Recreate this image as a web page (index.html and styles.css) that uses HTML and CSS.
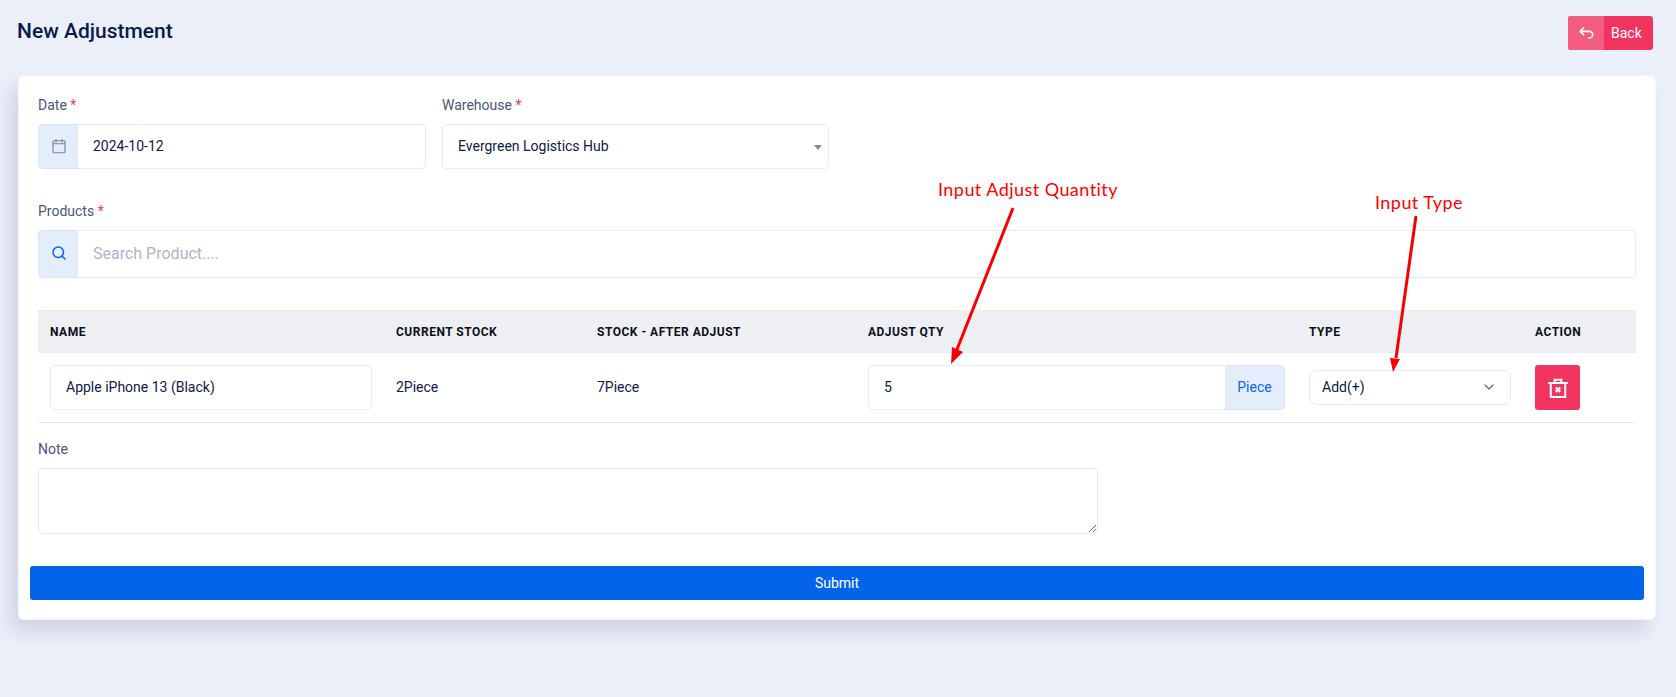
FILE: index.html
```html
<!DOCTYPE html>
<html lang="en">

<head>
    <meta charset="UTF-8">
    <meta name="viewport" content="width=device-width, initial-scale=1.0">
    <title>New Adjustment</title>
    <link rel="stylesheet" href="styles.css">
</head>

<body>
    <div class="page">
        <div class="page-header">
            <h1>New Adjustment</h1>
            <a class="back-btn" href="#">
                <span class="back-icon">
                    <svg width="20" height="20" viewBox="0 0 24 24"><path d="M9 14l-4 -4l4 -4M5 10h11a4 4 0 1 1 0 8h-1"/></svg>
                </span>
                <span class="back-text">Back</span>
            </a>
        </div>

        <form class="card">
            <div class="card-body">
                <div class="row">
                    <div class="field date-field">
                        <label>Date <span class="req">*</span></label>
                        <div class="input-group">
                            <span class="addon icon-gray">
                                <svg width="18" height="18" viewBox="0 0 24 24"><rect x="4" y="5" width="16" height="16" rx="1"/><path d="M16 3v4M8 3v4M4 9h16"/></svg>
                            </span>
                            <input type="text" value="2024-10-12">
                        </div>
                    </div>
                    <div class="field warehouse-field">
                        <label>Warehouse <span class="req">*</span></label>
                        <div class="select-box">
                            <span>Evergreen Logistics Hub</span>
                            <span class="caret"></span>
                        </div>
                    </div>
                </div>

                <div class="field products-field">
                    <label>Products <span class="req">*</span></label>
                    <div class="input-group tall">
                        <span class="addon icon-blue">
                            <svg width="18" height="18" viewBox="0 0 24 24"><circle cx="11" cy="11" r="7"/><path d="M20 20l-4 -4"/></svg>
                        </span>
                        <input class="search" type="text" placeholder="Search Product....">
                    </div>
                </div>

                <table class="items">
                    <thead>
                        <tr>
                            <th class="col-name">Name</th>
                            <th class="col-current">Current Stock</th>
                            <th class="col-after">Stock - After Adjust</th>
                            <th class="col-qty">Adjust Qty</th>
                            <th class="col-type">Type</th>
                            <th>Action</th>
                        </tr>
                    </thead>
                    <tbody>
                        <tr>
                            <td><input type="text" value="Apple iPhone 13 (Black)"></td>
                            <td>2Piece</td>
                            <td>7Piece</td>
                            <td>
                                <div class="input-group">
                                    <input type="text" value="5">
                                    <span class="addon unit">Piece</span>
                                </div>
                            </td>
                            <td>
                                <div class="select-box small">
                                    <span>Add(+)</span>
                                    <svg class="chevron" width="16" height="16" viewBox="0 0 24 24"><path d="M6 9l6 6l6 -6"/></svg>
                                </div>
                            </td>
                            <td>
                                <a class="delete-btn" href="#">
                                    <svg width="20" height="20" viewBox="0 0 18 18"><path d="M1 4.500h16M2.500 4.500v12.500h13v-12.500M6 4.500v-3h6v3"/><path class="x-mark" d="M7 8.500l4 4m0 -4l-4 4"/></svg>
                                </a>
                            </td>
                        </tr>
                    </tbody>
                </table>

                <div class="field note-field">
                    <label>Note</label>
                    <textarea></textarea>
                </div>
            </div>

            <button class="submit" type="button">Submit</button>
        </form>
    </div>

    <!-- red annotations drawn over the screenshot -->
    <span class="note-label qty-label">Input Adjust Quantity</span>
    <span class="note-label type-label">Input Type</span>
    <svg class="arrows" width="1676" height="697" viewBox="0 0 1676 697">
        <path class="arrow-line" d="M1013 208L956 352"/>
        <path class="arrow-head" d="M951 364L952 347L963 352Z"/>
        <path class="arrow-line" d="M1416 216L1396 358"/>
        <path class="arrow-head" d="M1393 372L1390 358L1400 359Z"/>
    </svg>
</body>

</html>
```
FILE: styles.css
```css
* {
    margin: 0;
    padding: 0;
    box-sizing: border-box;
}

body {
    min-height: 100vh;
    background-color: #ebeffa;
    font-family: Roboto, "Liberation Sans", sans-serif;
    font-size: 14px;
    color: #0e1a47;
    overflow: hidden;
}

svg {
    fill: none;
    stroke: currentColor;
    stroke-width: 2;
    stroke-linecap: round;
    stroke-linejoin: round;
}

.page {
    padding: 16px 20px 0 18px;
}

.page-header {
    display: flex;
    justify-content: space-between;
    align-items: flex-start;
    height: 59px;
    padding-right: 3px;
}

.page-header h1 {
    margin-left: -1px;
    font-size: 21px;
    font-weight: 500;
    line-height: 30px;
    color: #0a1a4a;
}

.back-btn {
    display: flex;
    height: 34px;
    width: 85px;
    border-radius: 3px;
    overflow: hidden;
    background-color: #f1345f;
    color: #fff;
    text-decoration: none;
}

.back-icon {
    display: flex;
    align-items: center;
    justify-content: center;
    width: 36px;
    background-color: #f45c80;
}

.back-text {
    line-height: 34px;
    padding-left: 7px;
}

.card {
    background-color: #fff;
    border-radius: 6px;
    border: 1px solid #f4f5fa;
    padding: 19px 11px 19px;
    box-shadow: -8px 12px 18px 0 rgba(25, 42, 70, 0.13);
}

.card-body {
    padding: 0 8px;
}

.row {
    display: flex;
    gap: 16px;
}

label {
    display: block;
    line-height: 21px;
    margin-bottom: 8px;
    color: #4b5675;
}

.req {
    color: #f1345f;
}

.date-field {
    width: 388px;
}

.warehouse-field {
    width: 387px;
}

.products-field {
    margin-top: 32px;
}

.note-field {
    margin-top: 16px;
    width: 1060px;
}

input {
    width: 100%;
    height: 45px;
    padding: 0 15px 2px;
    border: 1px solid #e6eaf4;
    border-radius: 5px;
    outline: none;
    font-family: inherit;
    font-size: 14px;
    color: #0e1a47;
    background-color: #fff;
}

.input-group {
    display: flex;
    height: 45px;
}

.input-group.tall {
    height: 48px;
}

.input-group input {
    flex: 1;
    min-width: 0;
    height: 100%;
}

.addon {
    display: flex;
    align-items: center;
    justify-content: center;
    flex: none;
    width: 40px;
    padding-bottom: 2px;
    background-color: #e3edfc;
    border: 1px solid #d5e3f8;
    border-right: 0;
    border-radius: 5px 0 0 5px;
}

.addon + input {
    border-left: 0;
    border-radius: 0 5px 5px 0;
}

.icon-gray {
    color: #7a8499;
}

.icon-gray svg {
    stroke-width: 1.5;
}

.icon-blue {
    color: #0b63e8;
}

input.search {
    font-size: 16px;
}

input.search::placeholder {
    color: #aeb5c8;
    opacity: 1;
}

.input-group input:first-child {
    border-right: 0;
    border-radius: 5px 0 0 5px;
}

.addon.unit {
    width: 60px;
    border: 1px solid #d5e3f8;
    border-left: 0;
    border-radius: 0 5px 5px 0;
    color: #0b63e8;
}

.select-box {
    display: flex;
    align-items: center;
    justify-content: space-between;
    height: 45px;
    padding: 0 6px 2px 15px;
    border: 1px solid #e6eaf4;
    border-radius: 5px;
    background-color: #fff;
}

.select-box.small {
    height: 35px;
    padding: 0 13px 2px 12px;
    border-radius: 7px;
}

.caret {
    width: 0;
    height: 0;
    margin-top: 3px;
    border-left: 4px solid transparent;
    border-right: 4px solid transparent;
    border-top: 5px solid #858a94;
}

.chevron {
    color: #6b7280;
    margin-top: 1px;
}

.items {
    width: 100%;
    margin-top: 32px;
    border-collapse: collapse;
    table-layout: fixed;
}

.items th {
    height: 43px;
    padding: 0 12px;
    background-color: #eeeff3;
    font-size: 12px;
    font-weight: 700;
    letter-spacing: 0.5px;
    line-height: 16px;
    text-align: left;
    text-transform: uppercase;
    color: #0b0f1c;
}

.items td {
    padding: 12px;
    border-bottom: 1px solid #e6e8f1;
    vertical-align: middle;
}

.items tbody td:nth-child(2),
.items tbody td:nth-child(3) {
    padding-bottom: 14px;
}

.col-name {
    width: 346px;
}

.col-current {
    width: 201px;
}

.col-after {
    width: 271px;
}

.col-qty {
    width: 441px;
}

.col-type {
    width: 226px;
}

.delete-btn {
    display: flex;
    align-items: center;
    justify-content: center;
    width: 45px;
    height: 45px;
    border-radius: 3px;
    background-color: #f1345f;
    color: #fff;
}

.delete-btn svg {
    stroke-width: 1.8;
    stroke-linecap: square;
    stroke-linejoin: miter;
}

.delete-btn .x-mark {
    stroke-width: 2;
    stroke-linecap: butt;
}

textarea {
    display: block;
    width: 100%;
    height: 66px;
    padding: 8px 12px;
    border: 1px solid #e6eaf4;
    border-radius: 5px;
    outline: none;
    background-color: #fff;
}

.submit {
    display: block;
    width: 100%;
    height: 34px;
    margin-top: 32px;
    border: 0;
    border-radius: 3px;
    background-color: #0363e9;
    color: #fff;
    font-family: inherit;
    font-size: 14px;
}

.note-label {
    position: absolute;
    font-family: Lato, sans-serif;
    font-size: 18px;
    font-weight: 400;
    line-height: 22px;
    letter-spacing: 0.45px;
    color: #ff0000;
    white-space: nowrap;
}

.qty-label {
    left: 938px;
    top: 178px;
}

.type-label {
    left: 1375px;
    top: 191px;
}

.arrows {
    position: absolute;
    left: 0;
    top: 0;
    pointer-events: none;
}

.arrow-line {
    stroke: #f80000;
    stroke-width: 3;
    stroke-linecap: butt;
}

.arrow-head {
    fill: #f80000;
    stroke: none;
}
```
